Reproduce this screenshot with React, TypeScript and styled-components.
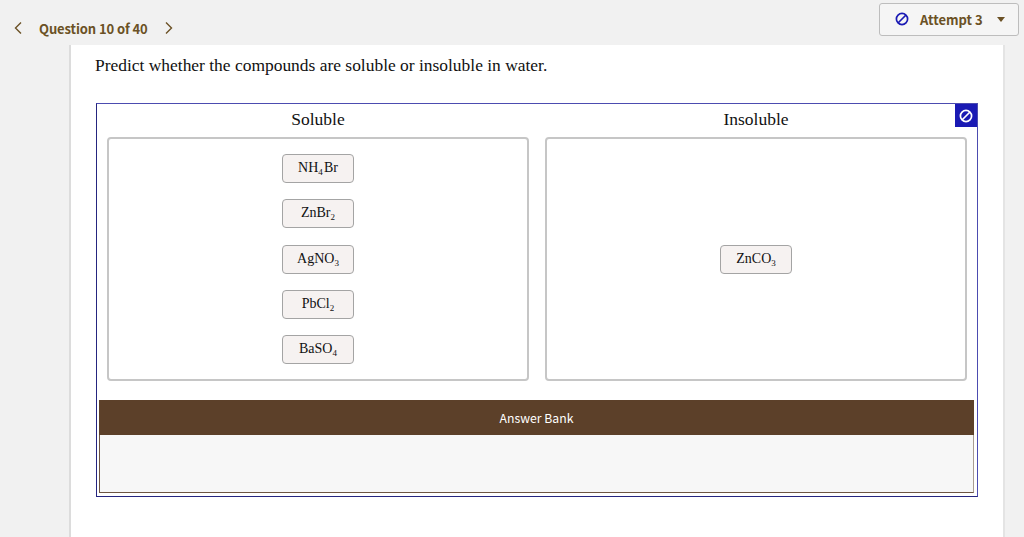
import styled, { createGlobalStyle } from "styled-components";

const GlobalStyle = createGlobalStyle`
  html, body {
    margin: 0;
    height: 537px;
    overflow: hidden;
    background: #f1f1f1;
  }
`;

const Page = styled.div`
  width: 1024px;
  height: 537px;
  overflow: hidden;
  display: flex;
  flex-direction: column;
`;

const TopBar = styled.header`
  height: 45px;
  flex: none;
  display: flex;
  justify-content: space-between;
  padding: 3px 5px 0 13px;
  box-sizing: border-box;
  font-family: "Noto Sans CJK SC", "Noto Sans", sans-serif;
  color: #6b5125;
`;

const QuestionNav = styled.nav`
  display: flex;
  align-items: center;
  height: 50px;
  align-self: flex-start;
`;

const NavIcon = styled.svg`
  width: 10px;
  height: 14px;
  fill: none;
  stroke: #6b5125;
  stroke-width: 1.4;
`;

const QuestionLabel = styled.span`
  font-size: 13px;
  font-weight: 700;
  margin: 0 16px;
  letter-spacing: -0.1px;
`;

const AttemptButton = styled.button`
  width: 140px;
  height: 33px;
  box-sizing: border-box;
  display: flex;
  align-items: center;
  padding: 0 0 1px 15px;
  background: #f5f5f5;
  border: 1px solid #bdbdbd;
  border-radius: 3px;
  font-family: inherit;
  color: inherit;
`;

const AttemptLabel = styled.span`
  font-size: 13px;
  font-weight: 700;
  margin-left: 11px;
`;

const Caret = styled.span`
  width: 0;
  height: 0;
  margin-left: 14px;
  border-left: 4px solid transparent;
  border-right: 4px solid transparent;
  border-top: 5px solid #6b5125;
`;

const Card = styled.main`
  width: 908px;
  margin-left: 69px;
  flex: 1;
  background: #fff;
  border-left: 2px solid #dcdcdc;
  border-right: 2px solid #e4e4e4;
  padding: 9px 0 0 24px;
`;

const Prompt = styled.p`
  margin: 0 0 26px;
  height: 23px;
  font: 17.45px/23px "Liberation Serif", serif;
  color: #111;
`;

const Widget = styled.section`
  position: relative;
  width: 882px;
  height: 394px;
  margin-left: 1px;
  box-sizing: border-box;
  border: 1px solid #25257f;
  border-top-color: #4c4cb0;
  border-right-color: #4c4cb0;
  display: flex;
  flex-direction: column;
`;

const Columns = styled.div`
  display: grid;
  grid-template-columns: 422px 422px;
  column-gap: 16px;
  padding: 0 10px;
`;

const Column = styled.div`
  display: flex;
  flex-direction: column;
`;

const ColumnTitle = styled.h3`
  margin: 0;
  height: 33px;
  font: 400 17.5px/31px "Liberation Serif", serif;
  color: #111;
  text-align: center;
`;

const DropBox = styled.div`
  height: 244px;
  box-sizing: border-box;
  border: 2px solid #c6c6c6;
  border-radius: 4px;
  display: flex;
  flex-direction: column;
  align-items: center;
  justify-content: center;
  gap: 16.25px;
`;

const Chip = styled.div`
  width: 72px;
  height: 29px;
  box-sizing: border-box;
  background: #f6f2f1;
  border: 1px solid #a4a4a4;
  border-radius: 4px;
  text-align: center;
  font: 14px/25px "Liberation Serif", serif;
  color: #111;

  & sub {
    font-size: 9px;
    line-height: 0;
    vertical-align: -3px;
  }
`;

const Badge = styled.div`
  position: absolute;
  top: 0;
  right: 0;
  width: 22px;
  height: 23px;
  background: #1a1ab4;
  display: flex;
  align-items: center;
  justify-content: center;
`;

const BlockIcon = styled.svg`
  width: 14px;
  height: 14px;
  fill: none;
  stroke: ${(props) => props.color};
  stroke-width: 1.7;
`;

const AnswerBank = styled.div`
  margin: 19px 3px 0 2px;
  display: flex;
  flex-direction: column;
`;

const BankHeader = styled.div`
  height: 35px;
  background: #5c4029;
  color: #fff;
  display: flex;
  align-items: center;
  justify-content: center;
  font: 400 12.25px "Noto Sans CJK SC", "Noto Sans", sans-serif;
`;

const BankBody = styled.div`
  height: 58px;
  box-sizing: border-box;
  background: #f7f7f7;
  border-left: 1px solid #6d5542;
  border-right: 1px solid #a89c92;
  border-bottom: 1px solid #6d5542;
`;

function Block({ color }: { color: string }) {
  return (
    <BlockIcon viewBox="0 0 14 14" color={color}>
      <circle cx="7" cy="7" r="5.6" />
      <path d="M3 11 11 3" />
    </BlockIcon>
  );
}

export default function App() {
  return (
    <Page>
      <GlobalStyle />
      <TopBar>
        <QuestionNav>
          <NavIcon viewBox="0 0 10 14">
            <path d="M8 1.5 2.5 7 8 12.5" />
          </NavIcon>
          <QuestionLabel>Question 10 of 40</QuestionLabel>
          <NavIcon viewBox="0 0 10 14">
            <path d="M2 1.5 7.5 7 2 12.5" />
          </NavIcon>
        </QuestionNav>
        <AttemptButton>
          <Block color="#1a1ab4" />
          <AttemptLabel>Attempt 3</AttemptLabel>
          <Caret />
        </AttemptButton>
      </TopBar>
      <Card>
        <Prompt>Predict whether the compounds are soluble or insoluble in water.</Prompt>
        <Widget>
          <Badge>
            <Block color="#fff" />
          </Badge>
          <Columns>
            <Column>
              <ColumnTitle>Soluble</ColumnTitle>
              <DropBox>
                <Chip>NH<sub>4</sub>&#8202;Br</Chip>
                <Chip>ZnBr<sub>2</sub></Chip>
                <Chip>AgNO<sub>3</sub></Chip>
                <Chip>PbCl<sub>2</sub></Chip>
                <Chip>BaSO<sub>4</sub></Chip>
              </DropBox>
            </Column>
            <Column>
              <ColumnTitle>Insoluble</ColumnTitle>
              <DropBox>
                <Chip>ZnCO<sub>3</sub></Chip>
              </DropBox>
            </Column>
          </Columns>
          <AnswerBank>
            <BankHeader>Answer Bank</BankHeader>
            <BankBody />
          </AnswerBank>
        </Widget>
      </Card>
    </Page>
  );
}
